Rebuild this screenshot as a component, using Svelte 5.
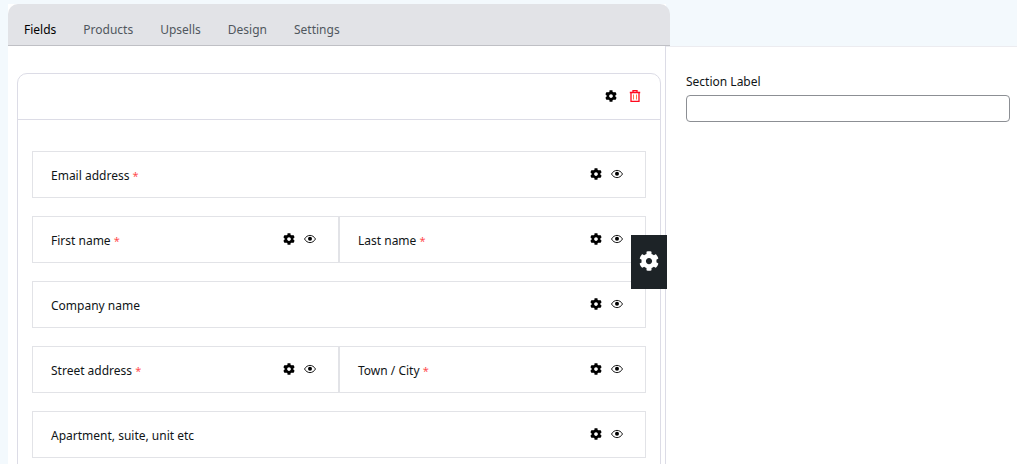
<script lang="ts">
    const tabs = ["Fields", "Products", "Upsells", "Design", "Settings"];

    const rows = [
        [{ id: "email", label: "Email address", required: true }],
        [
            { id: "first", label: "First name", required: true },
            { id: "last", label: "Last name", required: true },
        ],
        [{ id: "company", label: "Company name", required: false }],
        [
            { id: "street", label: "Street address", required: true },
            { id: "city", label: "Town / City", required: true },
        ],
        [{ id: "apartment", label: "Apartment, suite, unit etc", required: false }],
    ];

    let active = $state("Fields");
    let sectionLabel = $state("");
    let panelOpen = $state(true);
    let hidden: Record<string, boolean> = $state({});
</script>

{#snippet cog()}
    <svg class="cog" viewBox="0 0 512 512" aria-hidden="true">
        <path
            d="M487.4 315.7l-42.6-24.6c4.3-23.2 4.3-47 0-70.2l42.6-24.6c4.9-2.8 7.1-8.6 5.5-14-11.1-35.6-30-67.8-54.7-94.6-3.8-4.1-10-5.1-14.8-2.3L380.8 110c-17.9-15.4-38.5-27.3-60.8-35.1V25.8c0-5.6-3.9-10.5-9.4-11.7-36.7-8.2-74.3-7.8-109.2 0-5.5 1.2-9.4 6.1-9.4 11.7V75c-22.2 7.9-42.8 19.8-60.8 35.1L88.7 85.5c-4.9-2.8-11-1.9-14.8 2.3-24.7 26.7-43.6 58.9-54.7 94.6-1.7 5.4.6 11.2 5.5 14L67.3 221c-4.3 23.2-4.3 47 0 70.2l-42.6 24.6c-4.9 2.8-7.1 8.6-5.5 14 11.1 35.6 30 67.8 54.7 94.6 3.8 4.1 10 5.1 14.8 2.3l42.6-24.6c17.9 15.4 38.5 27.3 60.8 35.1v49.2c0 5.6 3.9 10.5 9.4 11.7 36.7 8.2 74.3 7.8 109.2 0 5.5-1.2 9.4-6.1 9.4-11.7v-49.2c22.2-7.9 42.8-19.8 60.8-35.1l42.6 24.6c4.9 2.8 11 1.9 14.8-2.3 24.7-26.7 43.6-58.9 54.7-94.6 1.5-5.5-.7-11.3-5.6-14.1zM256 336c-44.1 0-80-35.9-80-80s35.9-80 80-80 80 35.9 80 80-35.9 80-80 80z"
        />
    </svg>
{/snippet}

<div class="editor">
    <main class="builder">
        <nav class="tabs">
            {#each tabs as tab}
                <button class="tab" class:active={active === tab} onclick={() => (active = tab)}>{tab}</button>
            {/each}
        </nav>

        <div class="canvas">
            <section class="section">
                <header class="section-head">
                    <button class="icon" aria-label="Section settings">{@render cog()}</button>
                    <button class="icon trash" aria-label="Delete section">
                        <svg viewBox="0 0 12 12" aria-hidden="true">
                            <path d="M0.8 2.5h10.4M4 2.3V0.6h4v1.7M2 2.5v9h8v-9" />
                            <path class="bars" d="M4.5 4.5v5M7.5 4.5v5" />
                        </svg>
                    </button>
                </header>

                <div class="fields">
                    {#each rows as row}
                        <div class="row">
                            {#each row as field (field.id)}
                                <div class="field">
                                    <span class="name">
                                        {field.label}
                                        {#if field.required}<span class="star">*</span>{/if}
                                    </span>
                                    <button class="icon" aria-label="{field.label} settings">{@render cog()}</button>
                                    <button
                                        class="icon eye"
                                        class:off={hidden[field.id]}
                                        aria-label="Toggle {field.label}"
                                        onclick={() => (hidden[field.id] = !hidden[field.id])}
                                    >
                                        <svg viewBox="0 0 12 12" aria-hidden="true">
                                            <path d="M0.5 6C3.2 1.2 8.8 1.2 11.5 6C8.8 10.8 3.2 10.8 0.5 6z" />
                                            <circle cx="6" cy="5.8" r="2" />
                                        </svg>
                                    </button>
                                </div>
                            {/each}
                        </div>
                    {/each}
                </div>
            </section>
        </div>

        <button class="toggle" aria-label="Toggle settings panel" onclick={() => (panelOpen = !panelOpen)}>
            {@render cog()}
        </button>
    </main>

    <aside class="side">
        {#if panelOpen}
            <label for="section-label">Section Label</label>
            <input id="section-label" type="text" bind:value={sectionLabel} />
        {/if}
    </aside>
</div>

<style>
    :global(html) {
        scrollbar-width: none;
    }

    :global(body) {
        background: #f3f9fd;
    }

    .editor {
        display: grid;
        grid-template-columns: 658fr 351fr;
        min-height: 100vh;
        box-sizing: border-box;
        padding: 4px 0 0 8px;
        font-family: "Noto Sans", "Open Sans", sans-serif;
        font-size: 12px;
        line-height: 20px;
        color: #101517;
    }

    button {
        font: inherit;
        color: inherit;
        background: none;
        border: 0;
        padding: 0;
        cursor: pointer;
    }

    svg {
        display: block;
        width: 12px;
        height: 12px;
    }

    .cog {
        fill: currentColor;
    }

    .builder {
        position: relative;
        min-width: 0;
        display: flex;
        flex-direction: column;
        background: #fff;
    }

    .tabs {
        display: flex;
        gap: 27px;
        margin-right: -4px;
        padding: 16px 16px 5px;
        background: #e2e3e7;
        border-bottom: 1px solid #bfc0c5;
        border-radius: 10px 10px 0 0;
    }

    .tab {
        color: #50575e;
    }

    .tab.active {
        color: #000;
    }

    .canvas {
        flex: 1;
        padding: 27px 4px 0 9px;
        border-right: 1px solid #dcdce6;
    }

    .section {
        border: 1px solid #dcdce6;
        border-radius: 10px;
    }

    .section-head {
        display: flex;
        align-items: center;
        justify-content: flex-end;
        gap: 12px;
        height: 44px;
        padding: 0 19px 1px;
        border-bottom: 1px solid #dcdce6;
    }

    .icon {
        color: #000;
    }

    .trash svg {
        fill: none;
        stroke: #ff0a1e;
        stroke-width: 1.3;
    }

    .trash .bars {
        stroke: #ff7a45;
        stroke-width: 1;
    }

    .fields {
        display: flex;
        flex-direction: column;
        gap: 18px;
        padding: 31px 14px;
    }

    .row {
        display: flex;
    }

    .field {
        flex: 1;
        display: flex;
        align-items: flex-start;
        gap: 9px;
        padding: 14px 22px 11px 18px;
        border: 1px solid #e2e3e7;
    }

    .name {
        flex: 1;
    }

    .field .icon {
        padding-top: 2px;
    }

    .star {
        font-size: 11px;
        color: #ff4d4f;
    }

    .eye svg {
        fill: none;
        stroke: #000;
        stroke-width: 0.9;
    }

    .eye circle {
        fill: #000;
        stroke: none;
    }

    .eye.off {
        opacity: 0.4;
    }

    .toggle {
        position: absolute;
        top: 231px;
        right: -1px;
        display: flex;
        align-items: center;
        justify-content: center;
        width: 36px;
        height: 54px;
        padding-bottom: 2px;
        background: #1d2327;
        color: #fff;
    }

    .toggle svg {
        width: 20px;
        height: 20px;
    }

    .side {
        display: flex;
        flex-direction: column;
        gap: 3px;
        margin-top: 42px;
        padding: 25px 7px 0 20px;
        background: #fff;
        border-top: 1px solid #ececf0;
    }

    .side input {
        height: 27px;
        box-sizing: border-box;
        padding: 0 8px;
        font: inherit;
        border: 1px solid #8c8f94;
        border-radius: 4px;
    }
</style>
